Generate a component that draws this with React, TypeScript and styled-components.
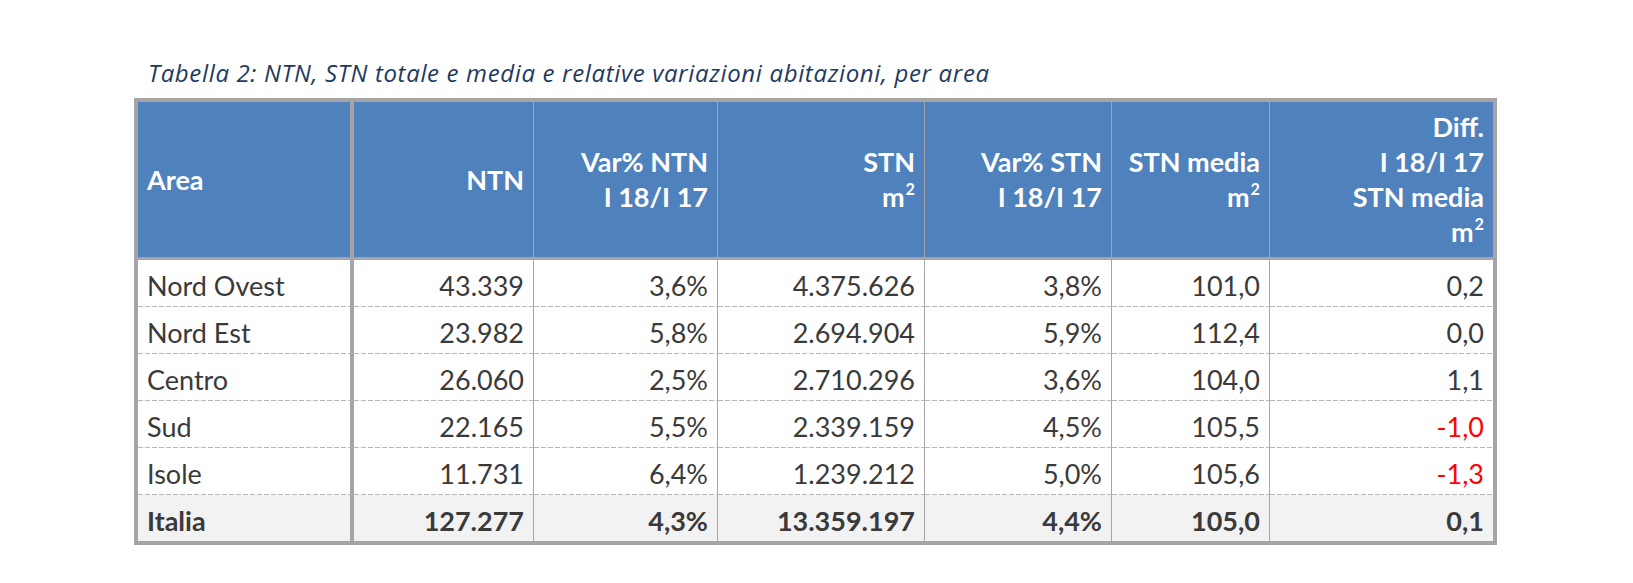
import React from "react";
import styled, { createGlobalStyle } from "styled-components";

const GlobalStyle = createGlobalStyle`
  * {
    box-sizing: border-box;
  }
  html,
  body {
    margin: 0;
    padding: 0;
    background: #ffffff;
  }
  body {
    font-family: Lato, "Open Sans", "Liberation Sans", sans-serif;
  }
`;

const Page = styled.div`
  display: flex;
  flex-direction: column;
  align-items: flex-start;
  gap: 9px;
  padding: 57px 0 0 134px;
  width: 1633px;
  height: 583px;
`;

const Caption = styled.div`
  margin-left: 14px;
  font-family: "Open Sans", Lato, sans-serif;
  font-style: italic;
  font-size: 24px;
  line-height: 32px;
  letter-spacing: 0.65px;
  color: #1f3a60;
  white-space: nowrap;
`;

const Table = styled.table`
  border-collapse: separate;
  border-spacing: 0;
  table-layout: fixed;
  width: 1363px;
  border: 4px solid #a5a5a5;
  font-size: 27px;
`;

const HeadCell = styled.th<{ $first?: boolean; $last?: boolean }>`
  background: #4f81bd;
  color: #ffffff;
  font-weight: 700;
  line-height: 35px;
  padding: 7px 9px 8px;
  vertical-align: middle;
  text-align: ${(p) => (p.$first ? "left" : "right")};
  border-bottom: 3px solid #a5a5a5;
  border-right: ${(p) =>
    p.$last ? "none" : p.$first ? "4px solid #a5a5a5" : "1px solid #a6a6a6"};
  white-space: nowrap;
`;

const Row = styled.tr<{ $total?: boolean }>`
  background: ${(p) => (p.$total ? "#f2f2f2" : "#ffffff")};
  font-weight: ${(p) => (p.$total ? 700 : 400)};
`;

const Cell = styled.td<{
  $first?: boolean;
  $last?: boolean;
  $negative?: boolean;
  $dashed?: boolean;
}>`
  line-height: 33px;
  padding: 9px 9px 4px;
  color: ${(p) => (p.$negative ? "#ff0000" : "#3a3a3a")};
  text-align: ${(p) => (p.$first ? "left" : "right")};
  border-right: ${(p) =>
    p.$last ? "none" : p.$first ? "4px solid #a5a5a5" : "1px solid #a6a6a6"};
  border-bottom: ${(p) => (p.$dashed ? "1px solid transparent" : "none")};
  background-image: ${(p) =>
    p.$dashed
      ? "repeating-linear-gradient(to right, #b8b8b8 0 5px, transparent 5px 7px)"
      : "none"};
  background-size: 100% 1px;
  background-position: left bottom;
  background-repeat: no-repeat;
  background-origin: border-box;
  white-space: nowrap;
`;

const Sup = styled.sup`
  font-size: 0.6em;
  line-height: 0;
  vertical-align: 0.75em;
  margin-left: 1px;
`;

const m2 = (
  <>
    m<Sup>2</Sup>
  </>
);

const widths = [216, 180, 184, 207, 187, 158, 223];

const headers: React.ReactNode[] = [
  "Area",
  "NTN",
  <>
    Var% NTN
    <br />I 18/I 17
  </>,
  <>
    STN
    <br />
    {m2}
  </>,
  <>
    Var% STN
    <br />I 18/I 17
  </>,
  <>
    STN media
    <br />
    {m2}
  </>,
  <>
    Diff.
    <br />I 18/I 17
    <br />
    STN media
    <br />
    {m2}
  </>,
];

const rows = [
  ["Nord Ovest", "43.339", "3,6%", "4.375.626", "3,8%", "101,0", "0,2"],
  ["Nord Est", "23.982", "5,8%", "2.694.904", "5,9%", "112,4", "0,0"],
  ["Centro", "26.060", "2,5%", "2.710.296", "3,6%", "104,0", "1,1"],
  ["Sud", "22.165", "5,5%", "2.339.159", "4,5%", "105,5", "-1,0"],
  ["Isole", "11.731", "6,4%", "1.239.212", "5,0%", "105,6", "-1,3"],
  ["Italia", "127.277", "4,3%", "13.359.197", "4,4%", "105,0", "0,1"],
];

const App = () => {
  return (
    <>
      <GlobalStyle />
      <Page>
        <Caption>
          Tabella 2: NTN, STN totale e media e relative variazioni abitazioni,
          per area
        </Caption>
        <Table>
          <colgroup>
            {widths.map((w, i) => (
              <col key={i} style={{ width: w }} />
            ))}
          </colgroup>
          <thead>
            <tr>
              {headers.map((h, i) => (
                <HeadCell
                  key={i}
                  $first={i === 0}
                  $last={i === headers.length - 1}
                >
                  {h}
                </HeadCell>
              ))}
            </tr>
          </thead>
          <tbody>
            {rows.map((row, r) => (
              <Row key={r} $total={r === rows.length - 1}>
                {row.map((value, i) => (
                  <Cell
                    key={i}
                    $first={i === 0}
                    $last={i === row.length - 1}
                    $negative={value.startsWith("-")}
                    $dashed={r < rows.length - 1}
                  >
                    {value}
                  </Cell>
                ))}
              </Row>
            ))}
          </tbody>
        </Table>
      </Page>
    </>
  );
};

export default App;
